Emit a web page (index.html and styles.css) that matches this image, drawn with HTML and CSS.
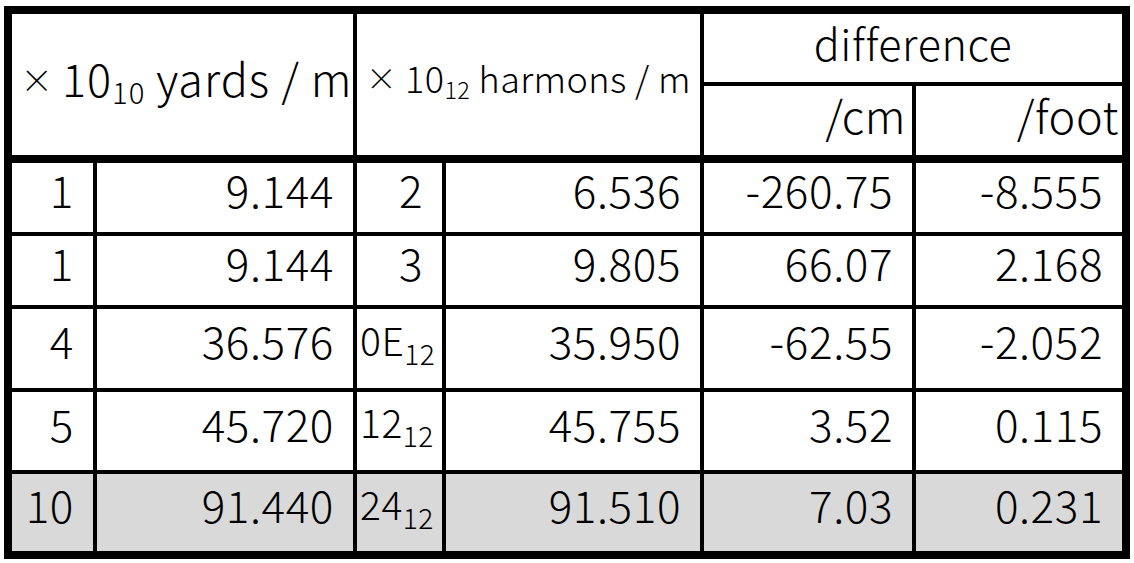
FILE: index.html
```html
<!DOCTYPE html>
<html lang="en">
<head>
    <meta charset="UTF-8">
    <meta name="viewport" content="width=device-width, initial-scale=1.0">
    <title>Yards and harmons</title>
    <link rel="stylesheet" href="styles.css">
</head>
<body>

<table class="units">
    <colgroup>
        <col class="c-n">
        <col class="c-val">
        <col class="c-n2">
        <col class="c-val2">
        <col class="c-diff">
        <col class="c-diff">
    </colgroup>
    <thead>
        <tr class="head-top">
            <th colspan="2" rowspan="2" class="yards"><span class="times">×</span>10<sub>10</sub> yards / m</th>
            <th colspan="2" rowspan="2" class="harmons"><span class="times">×</span>10<sub>12</sub> harmons / m</th>
            <th colspan="2" class="diff">difference</th>
        </tr>
        <tr class="head-sub">
            <th class="unit">/cm</th>
            <th class="unit foot">/foot</th>
        </tr>
    </thead>
    <tbody>
        <tr class="r-short">
            <td>1</td>
            <td>9.144</td>
            <td>2</td>
            <td>6.536</td>
            <td>-260.75</td>
            <td>-8.555</td>
        </tr>
        <tr class="r-short2">
            <td>1</td>
            <td>9.144</td>
            <td>3</td>
            <td>9.805</td>
            <td>66.07</td>
            <td>2.168</td>
        </tr>
        <tr class="r-tall">
            <td>4</td>
            <td>36.576</td>
            <td class="doz">0E<sub>12</sub></td>
            <td>35.950</td>
            <td>-62.55</td>
            <td>-2.052</td>
        </tr>
        <tr class="r-tall2">
            <td>5</td>
            <td>45.720</td>
            <td class="doz">12<sub>12</sub></td>
            <td>45.755</td>
            <td>3.52</td>
            <td>0.115</td>
        </tr>
        <tr class="r-tall total">
            <td>10</td>
            <td>91.440</td>
            <td class="doz">24<sub>12</sub></td>
            <td>91.510</td>
            <td>7.03</td>
            <td>0.231</td>
        </tr>
    </tbody>
</table>

</body>
</html>
```

FILE: styles.css
```css
body {
    margin: 0;
    background-color: #fff;
    font-family: "Noto Sans CJK JP", "Noto Sans", sans-serif;
    font-weight: 300;
    color: #000;
}

.units {
    border-collapse: collapse;
    table-layout: fixed;
    width: 1118px;
    margin: 6px 0 0 4px;
    border: 8px solid #000;
}

.c-n { width: 87px; }
.c-val { width: 260px; }
.c-n2 { width: 89px; }
.c-val2 { width: 258px; }
.c-diff { width: 212px; }

th, td {
    border: 4px solid #000;
    padding: 0 19px 17px 0;
    font-weight: 300;
    font-size: 44px;
    letter-spacing: 0.6px;
    line-height: 1;
    text-align: right;
    white-space: nowrap;
}

/* header */
thead tr.head-sub th,
thead th.yards,
thead th.harmons {
    border-bottom: 8px solid #000;
}

thead th.yards,
thead th.harmons {
    text-align: center;
    padding: 0 0 8px 0;
}

.yards {
    font-size: 45px;
    letter-spacing: 1px;
}

.yards .times {
    font-size: 0.72em;
    margin: 0 8px 0 8px;
}

.harmons {
    font-size: 36px;
    letter-spacing: 0.4px;
}

.times {
    font-size: 0.85em;
    vertical-align: 0.1em;
    margin-right: 8px;
}

.diff {
    text-align: center;
    padding: 0 0 12px 0;
    font-size: 43px;
}

.head-top { height: 74px; }
.head-sub { height: 75px; }

th.unit {
    font-size: 45px;
    padding: 0 6px 12px 0;
}

th.foot {
    padding-right: 3px;
}

sub {
    font-size: 0.65em;
    vertical-align: -0.25em;
    line-height: 1;
}

/* body rows */
.r-short { height: 75px; }
.r-short2 { height: 73px; }
.r-tall { height: 83px; }
.r-tall2 { height: 82px; }

td.doz {
    text-align: left;
    padding: 0 0 10px 3px;
    font-size: 39px;
    letter-spacing: 0.5px;
}

td.doz sub {
    font-size: 0.72em;
    vertical-align: -0.32em;
}

.total td {
    background-color: #d9d9d9;
}
```
